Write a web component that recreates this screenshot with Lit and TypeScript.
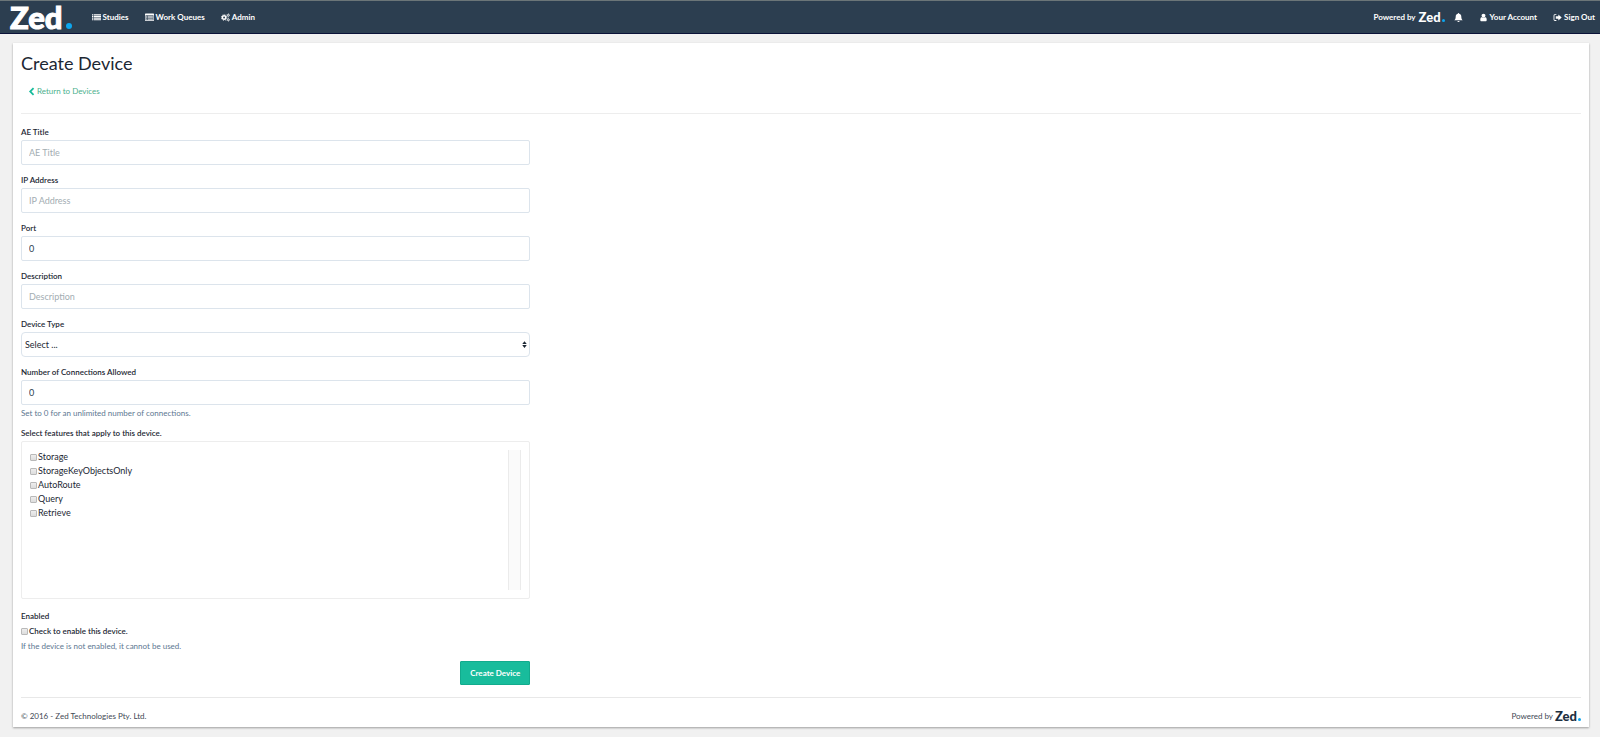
import { LitElement, html, css, svg, nothing } from "lit";
import { customElement, property } from "lit/decorators.js";

const icons = {
  list: svg`<path d="M0 2h2v2H0zM3 2h13v2H3zM0 5h2v2H0zM3 5h13v2H3zM0 8h2v2H0zM3 8h13v2H3zM0 11h2v2H0zM3 11h13v2H3z"/>`,
  queue: svg`<path fill-rule="evenodd" d="M1 1h14a1 1 0 0 1 1 1v11a1 1 0 0 1-1 1H1a1 1 0 0 1-1-1V2a1 1 0 0 1 1-1zm0 3v9h14V4z"/><path opacity=".8" d="M2 5h2v1.500H2zM5 5h9v1.500H5zM2 7.700h2v1.500H2zM5 7.700h9v1.500H5zM2 10.400h2v1.500H2zM5 10.400h9v1.500H5z"/>`,
  cogs: svg`<g fill="none" stroke="currentColor"><circle cx="5.500" cy="8" r="3" stroke-width="2.600"/><circle cx="5.500" cy="8" r="4.900" stroke-width="1.600" stroke-dasharray="2 1.850"/><circle cx="13" cy="4" r="1.600" stroke-width="1.400"/><circle cx="13" cy="4" r="2.700" stroke-width="1" stroke-dasharray="1.400 1.430"/><circle cx="13" cy="12" r="1.600" stroke-width="1.400"/><circle cx="13" cy="12" r="2.700" stroke-width="1" stroke-dasharray="1.400 1.430"/></g>`,
  bell: svg`<path d="M8 0a1 1 0 0 1 1 1.300c2.500.500 4 2.500 4 5.200 0 3.500 1 5 2.500 6.500H.500C2 11.500 3 10 3 6.500c0-2.700 1.500-4.700 4-5.200A1 1 0 0 1 8 0zM6 14h4a2 2 0 0 1-4 0z"/>`,
  user: svg`<g transform="scale(.00893)"><path d="M1536 1399q0 109-62.500 187t-150.500 78h-854q-88 0-150.500-78t-62.500-187q0-85 8.500-160.500t31.500-152 58.500-131 94-89 134.500-34.500q131 128 313 128t313-128q76 0 134.500 34.500t94 89 58.500 131 31.500 152 8.500 160.500zm-256-887q0 159-112.500 271.500t-271.500 112.500-271.500-112.500-112.500-271.500 112.500-271.500 271.500-112.500 271.500 112.500 112.500 271.500z"/></g>`,
  signOut: svg`<path d="M6 2H3.500A2.500 2.500 0 0 0 1 4.500v7A2.500 2.500 0 0 0 3.500 14H6v-1.500H3.500a1 1 0 0 1-1-1v-7a1 1 0 0 1 1-1H6zM9.500 2.500 15.500 8l-6 5.500v-3.300H5V5.800h4.500z"/>`,
  chevron: svg`<path d="M10.500 1 12.800 3.300 8 8l4.800 4.700L10.500 15l-7-7z"/>`,
  sort: svg`<path d="M8 2l4 5H4zM8 14l4-5H4z"/>`,
};

type IconName = keyof typeof icons;

@customElement("zed-icon")
class ZedIcon extends LitElement {
  @property() name: IconName = "list";

  static styles = css`
    :host { display: inline-flex; flex: none; }
    .glyph { width: 9px; height: 9px; fill: currentColor; }
  `;

  render() {
    return html`<svg class="glyph" viewBox="0 0 16 16" aria-hidden="true">${icons[this.name]}</svg>`;
  }
}

@customElement("zed-logo")
class ZedLogo extends LitElement {
  @property({ type: Boolean, reflect: true }) large = false;

  static styles = css`
    :host {
      display: inline-flex;
      align-items: baseline;
      gap: 1px;
      font: 900 13px/12px Lato, sans-serif;
    }
    :host([large]) { gap: 3px; font-size: 31px; line-height: 32px; -webkit-text-stroke: 1px currentColor; }
    .dot { width: 3px; height: 3px; border-radius: 50%; background: #0da6ee; }
    :host([large]) .dot { width: 6px; height: 6px; }
  `;

  render() {
    return html`<span>Zed</span><span class="dot"></span>`;
  }
}

@customElement("nav-bar")
class NavBar extends LitElement {
  static styles = css`
    :host { display: block; }
    .bar {
      display: flex;
      align-items: center;
      justify-content: space-between;
      box-sizing: border-box;
      height: 34px;
      padding: 0 5px 0 10px;
      border-top: 1px solid #6b7578;
      border-bottom: 1px solid #0a1238;
      background: #2c3e50;
      color: #fff;
      font-weight: 700;
    }
    .group { display: flex; align-items: center; gap: 16px; }
    .brand { display: flex; margin-right: 4px; }
    a { display: flex; align-items: center; gap: 2px; color: inherit; text-decoration: none; }
    .powered { display: flex; align-items: center; gap: 3px; margin-right: -7px; }
  `;

  render() {
    return html`
      <nav class="bar">
        <div class="group">
          <a class="brand" href="#home" aria-label="Zed home"><zed-logo large></zed-logo></a>
          <a href="#studies"><zed-icon name="list"></zed-icon>Studies</a>
          <a href="#queues"><zed-icon name="queue"></zed-icon>Work Queues</a>
          <a href="#admin"><zed-icon name="cogs"></zed-icon>Admin</a>
        </div>
        <div class="group">
          <span class="powered">Powered by <zed-logo></zed-logo></span>
          <a href="#alerts" aria-label="Notifications"><zed-icon name="bell"></zed-icon></a>
          <a href="#account"><zed-icon name="user"></zed-icon>Your Account</a>
          <a href="#signout"><zed-icon name="signOut"></zed-icon>Sign Out</a>
        </div>
      </nav>
    `;
  }
}

interface Field {
  id: string;
  label: string;
  type: "text" | "number" | "select";
  help?: string;
}

const fields: Field[] = [
  { id: "ae-title", label: "AE Title", type: "text" },
  { id: "ip-address", label: "IP Address", type: "text" },
  { id: "port", label: "Port", type: "number" },
  { id: "description", label: "Description", type: "text" },
  { id: "device-type", label: "Device Type", type: "select" },
  {
    id: "connections",
    label: "Number of Connections Allowed",
    type: "number",
    help: "Set to 0 for an unlimited number of connections.",
  },
];

const features = ["Storage", "StorageKeyObjectsOnly", "AutoRoute", "Query", "Retrieve"];

@customElement("device-form")
class DeviceForm extends LitElement {
  static styles = css`
    :host { display: block; width: calc((100% + 16px) / 3 - 16px); min-width: 280px; }
    * { box-sizing: border-box; }
    form { display: flex; flex-direction: column; }
    .field { display: flex; flex-direction: column; margin-bottom: 8px; }
    .field:has(.help) { margin-bottom: 4px; }
    .label { display: block; font-weight: 600; line-height: 15px; color: #1c2733; }
    .help { margin: 0; line-height: 17px; color: #5d7791; }
    .control {
      width: 100%;
      height: 25px;
      padding: 0 7px;
      border: 1px solid #dce4ec;
      border-radius: 2px;
      background: #fff;
      color: #2c3e50;
      font: inherit;
      font-size: 9px;
      appearance: none;
    }
    .control::placeholder { color: #a3adb2; opacity: 1; }
    .select { display: grid; align-items: center; color: #1c2733; }
    .select > * { grid-area: 1 / 1; }
    .select .control { padding: 0 3px; border-radius: 4px; color: inherit; }
    .select zed-icon { justify-self: end; margin-right: 1px; pointer-events: none; }
    .box {
      display: flex;
      justify-content: space-between;
      height: 158px;
      margin: 0 0 10px;
      padding: 8px;
      border: 1px solid #ededed;
      border-radius: 2px;
      font-size: 9px;
    }
    .track { width: 13px; border: solid #ebebeb; border-width: 0 1px; background: #fafafa; }
    .check { display: flex; align-items: center; gap: 1px; line-height: 14px; color: #1c2733; }
    .enable { font-weight: 600; }
    .check input {
      width: 7px;
      height: 7px;
      margin: 0;
      border: 1px solid #b9b9b9;
      border-radius: 1px;
      background: linear-gradient(#eee, #dcdcdc);
      appearance: none;
    }
    .check input:checked { background: #18bc9c; }
    .submit {
      align-self: flex-end;
      height: 24px;
      margin-top: 6px;
      padding: 0 9px;
      border: 1px solid #12ab8d;
      border-radius: 1px;
      background: #18bc9c;
      color: #fff;
      font: inherit;
      font-weight: 700;
    }
  `;

  private control(f: Field) {
    if (f.type === "select") {
      return html`<div class="select">
        <select class="control" id=${f.id}><option>Select ...</option></select>
        <zed-icon name="sort"></zed-icon>
      </div>`;
    }
    return f.type === "number"
      ? html`<input class="control" id=${f.id} inputmode="numeric" value="0" />`
      : html`<input class="control" id=${f.id} placeholder=${f.label} />`;
  }

  render() {
    return html`
      <form>
        ${fields.map(
          (f) => html`<div class="field">
            <label class="label" for=${f.id}>${f.label}</label>
            ${this.control(f)}
            ${f.help ? html`<p class="help">${f.help}</p>` : nothing}
          </div>`
        )}
        <div role="group" aria-labelledby="features-label">
          <span class="label" id="features-label">Select features that apply to this device.</span>
          <div class="box">
            <div>
              ${features.map((f) => html`<label class="check"><input type="checkbox" />${f}</label>`)}
            </div>
            <div class="track"></div>
          </div>
        </div>
        <span class="label">Enabled</span>
        <label class="check enable"><input type="checkbox" />Check to enable this device.</label>
        <p class="help">If the device is not enabled, it cannot be used.</p>
        <button class="submit" type="button">Create Device</button>
      </form>
    `;
  }
}

@customElement("app-root")
class AppRoot extends LitElement {
  static styles = css`
    :host {
      display: flex;
      flex-direction: column;
      box-sizing: border-box;
      min-height: 100vh;
      background: #f1f1f1;
      color: #1c2733;
      font: 8px/14px Lato, sans-serif;
    }
    .panel {
      flex: 1;
      display: flex;
      flex-direction: column;
      margin: 9px 11px 10px 13px;
      padding: 7px 8px 0;
      background: #fff;
      box-shadow: 0 1px 2px rgba(0, 0, 0, 0.35);
    }
    h1 { margin: 0; font-size: 18px; font-weight: 400; line-height: 26px; }
    .back {
      display: flex;
      align-items: center;
      align-self: flex-start;
      gap: 1px;
      margin: 8px 0 15px 6px;
      color: #4bb08d;
      text-decoration: none;
    }
    .back zed-icon { color: #18bc9c; }
    .rule { width: 100%; margin: 0 0 11px; border: 0; border-top: 1px solid #ededed; }
    footer {
      display: flex;
      align-items: center;
      justify-content: space-between;
      margin-top: auto;
      padding: 11px 0 4px;
      border-top: 1px solid #e8e8e8;
      color: #3f4a55;
    }
    .powered { display: flex; align-items: center; gap: 2px; }
    .powered zed-logo { color: #1c2e40; }
  `;

  render() {
    return html`
      <nav-bar></nav-bar>
      <main class="panel">
        <h1>Create Device</h1>
        <a class="back" href="#devices"><zed-icon name="chevron"></zed-icon>Return to Devices</a>
        <hr class="rule" />
        <device-form></device-form>
        <footer>
          <span>© 2016 - Zed Technologies Pty. Ltd.</span>
          <span class="powered">Powered by <zed-logo></zed-logo></span>
        </footer>
      </main>
    `;
  }
}
